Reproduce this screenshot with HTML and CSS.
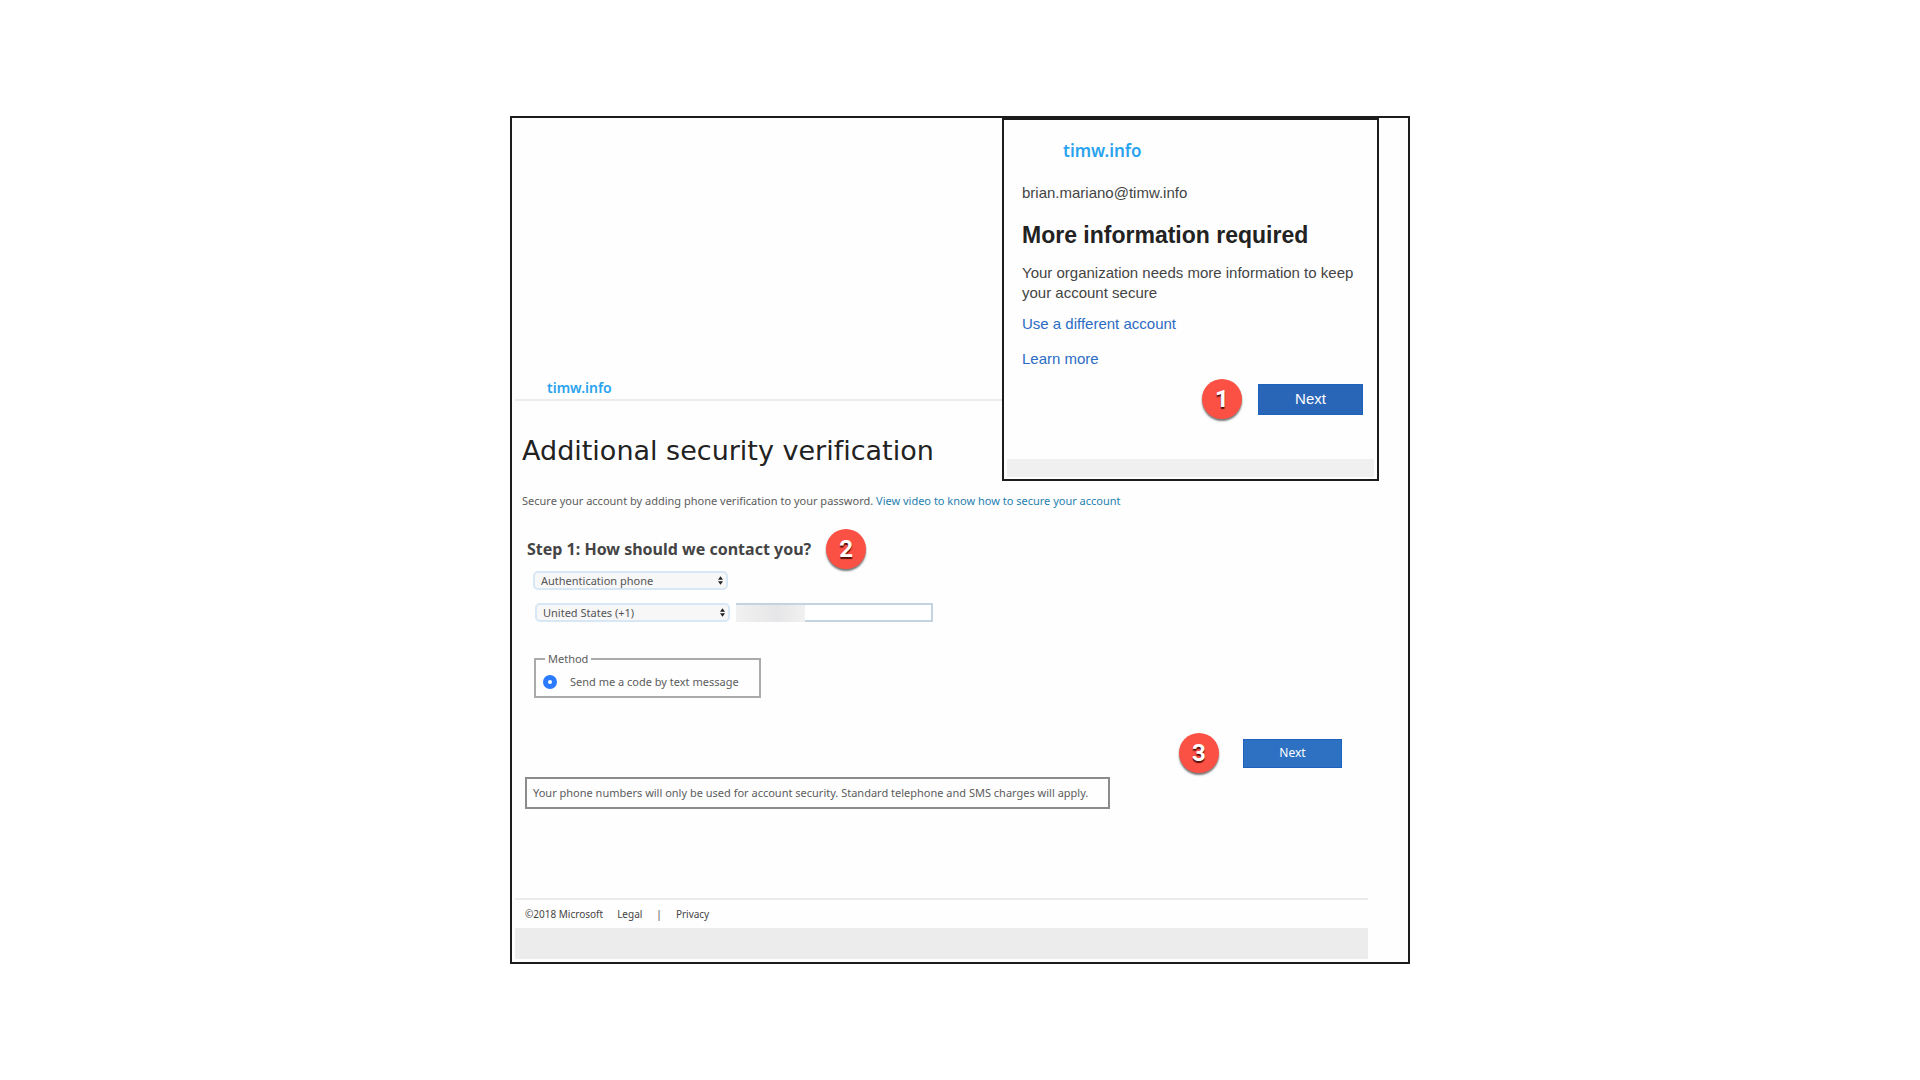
FILE: index.html
```html
<!DOCTYPE html>
<html lang="en">
<head>
    <meta charset="UTF-8">
    <meta name="viewport" content="width=device-width, initial-scale=1.0">
    <title>Additional security verification</title>
    <link rel="stylesheet" href="styles.css">
</head>
<body>

<div class="frame">
    <header class="header">
        <span class="brand">timw.info</span>
    </header>

    <main class="content">
        <h1>Additional security verification</h1>
        <p class="intro">Secure your account by adding phone verification to your password. <a href="#">View video to know how to secure your account</a></p>

        <form class="contact">
            <div class="step">
                <h2>Step 1: How should we contact you?</h2>
                <span class="badge">2</span>
            </div>

            <div class="row">
                <div class="select">
                    <select aria-label="Contact method">
                        <option>Authentication phone</option>
                    </select>
                    <svg viewBox="0 0 6 10"><path d="M3 0L6 4H0zM3 10L0 6H6z"/></svg>
                </div>
            </div>
            <div class="row phone-row">
                <div class="select">
                    <select aria-label="Country or region">
                        <option>United States (+1)</option>
                    </select>
                    <svg viewBox="0 0 6 10"><path d="M3 0L6 4H0zM3 10L0 6H6z"/></svg>
                </div>
                <div class="phone">
                    <input type="tel" aria-label="Phone number">
                    <span class="mask"></span>
                </div>
            </div>

            <fieldset>
                <legend>Method</legend>
                <label><input type="radio" name="method" checked> Send me a code by text message</label>
            </fieldset>

            <div class="actions">
                <span class="badge">3</span>
                <button type="button">Next</button>
            </div>
        </form>

        <p class="note">Your phone numbers will only be used for account security. Standard telephone and SMS charges will apply.</p>
    </main>

    <footer class="footer">
        <div class="links">
            <span>©2018 Microsoft</span>
            <a href="#">Legal</a>
            <span>|</span>
            <a href="#">Privacy</a>
        </div>
        <div class="bar"></div>
    </footer>

    <!-- Sign-in prompt on top of the page -->
    <section class="prompt">
        <div class="prompt-body">
            <span class="brand">timw.info</span>
            <p class="user">brian.mariano@timw.info</p>
            <h2>More information required</h2>
            <p>Your organization needs more information to keep your account secure</p>
            <a href="#">Use a different account</a>
            <a href="#">Learn more</a>
            <div class="actions">
                <span class="badge">1</span>
                <button type="button">Next</button>
            </div>
        </div>
        <div class="bar"></div>
    </section>
</div>

</body>
</html>
```
FILE: styles.css
```css
* { box-sizing: border-box; }
body {
    margin: 0;
    padding: 116px 20px;
    background: #fff;
    color: #5c5c5c;
    font-family: "Noto Sans", sans-serif;
    font-size: 11px;
    line-height: 20px;
}
h1, h2, p { margin: 0; }
a { text-decoration: none; }
.frame {
    position: relative;
    max-width: 900px;
    margin: auto;
    padding: 0 40px 3px 3px;
    background: #fefefe;
    border: 2px solid #1c1c1c;
}
.brand {
    color: #2aa3ef;
    font-family: "Noto Sans", sans-serif;
    font-weight: 600;
}
.header {
    padding: 260px 0 1px 32px;
    font-size: 14px;
    border-bottom: 2px solid #ececec;
}
.content { padding: 30px 0 89px 7px; }
h1 {
    color: #222;
    font-family: "DejaVu Sans", sans-serif;
    font-size: 27px;
    font-weight: normal;
    font-variant-ligatures: none;
    line-height: 40px;
}
.intro { margin-top: 20px; }
.intro a { color: #1f7fb0; }

.contact { margin-top: 18px; }
.step {
    display: flex;
    align-items: center;
    gap: 15px;
    padding-left: 5px;
}
.step h2 {
    color: #444;
    font-size: 16px;
    font-weight: bold;
}
.badge {
    display: flex;
    align-items: center;
    justify-content: center;
    flex: none;
    width: 40px;
    height: 40px;
    border-radius: 50%;
    background: #fb5145;
    box-shadow: 0 2px 2px #777;
    color: #fff;
    font-family: Roboto, sans-serif;
    font-size: 24px;
    font-weight: bold;
    text-shadow: 0 2px 1px #5a0f0a;
}
.row {
    display: flex;
    gap: 6px;
    margin: 2px 0 0 11px;
}
.phone-row { margin: 13px 0 0 13px; }
.select {
    position: relative;
    width: 195px;
}
select {
    display: block;
    appearance: none;
    width: 100%;
    height: 19px;
    padding: 0 6px;
    border: 2px solid #d8e7f5;
    border-radius: 5px;
    background: #f7f7f7;
    color: #555;
    font: inherit;
    line-height: 15px;
}
.select svg {
    position: absolute;
    top: 5px;
    right: 5px;
    width: 5px;
    height: 9px;
    fill: #222;
}
.phone {
    position: relative;
    width: 197px;
}
.phone input {
    display: block;
    width: 100%;
    height: 19px;
    padding: 0 4px;
    border: 2px solid #c3d3e0;
    background: #fff;
    font: inherit;
}
/* Hides the number */
.mask {
    position: absolute;
    top: 2px;
    left: 0;
    width: 69px;
    height: 17px;
    background: linear-gradient(to right, #f1f1f1, #e6e6e8 60%, #f1f1f1);
}
fieldset {
    width: 227px;
    margin: 29px 0 0 12px;
    padding: 5px 7px 4px;
    border: 2px solid #aaa;
}
legend {
    margin-left: 2px;
    padding: 0 3px;
    line-height: 16px;
}
fieldset label {
    display: flex;
    align-items: center;
    gap: 13px;
}
input[type="radio"] {
    appearance: none;
    width: 14px;
    height: 14px;
    margin: 0;
    border: 5px solid #2a7bff;
    border-radius: 50%;
    background: #fff;
}
.actions {
    display: flex;
    align-items: center;
    justify-content: flex-end;
    gap: 24px;
    margin-top: 35px;
    padding-right: 26px;
}
button {
    width: 99px;
    height: 29px;
    padding: 0;
    border: 1px solid #1d62bd;
    background: #2e70c2;
    color: #fff;
    font: inherit;
    font-size: 12px;
}
.note {
    width: fit-content;
    margin: 4px 0 0 3px;
    padding: 4px 20px 4px 6px;
    border: 2px solid #8c8c8c;
}

.footer { border-top: 2px solid #ebeded; }
.links {
    display: flex;
    gap: 14px;
    padding: 4px 10px;
    color: #444;
    font-size: 10px;
}
.links a { color: #444; }
.bar {
    height: 31px;
    background: #ececec;
}

.prompt {
    position: absolute;
    top: 0;
    right: 29px;
    width: 377px;
    padding: 0 3px 2px;
    background: #fefefe;
    border: 2px solid #1c1c1c;
    color: #444;
    font-family: "Liberation Sans", sans-serif;
    font-size: 15px;
}
.prompt-body {
    display: flex;
    flex-direction: column;
    align-items: flex-start;
    padding: 21px 11px 40px 15px;
}
.prompt .brand {
    margin-left: 41px;
    font-size: 17px;
}
.user { margin-top: 22px; }
.prompt h2 {
    margin: 22px 0 18px;
    color: #222;
    font-size: 23px;
    line-height: 20px;
}
.prompt a {
    margin-top: 11px;
    color: #2b6cc4;
}
.prompt a + a { margin-top: 15px; }
.prompt .actions {
    align-self: flex-end;
    gap: 16px;
    margin-top: 10px;
    padding: 0;
}
.prompt button {
    width: 105px;
    height: 31px;
    background: #2a66b8;
    font-size: 15px;
}
.prompt .bar {
    height: 18px;
    background: #f0f0f0;
}
```
